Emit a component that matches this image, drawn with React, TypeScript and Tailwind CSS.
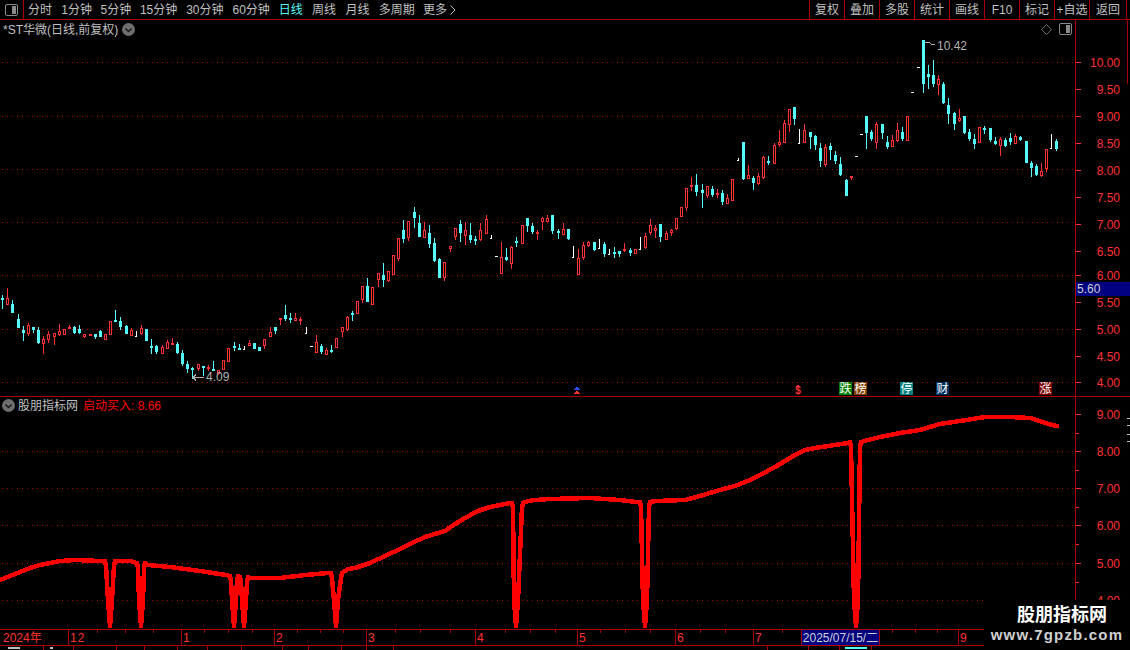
import React from "react";

type Candle = [string, number, number, number, number, number];

const CYAN = "#54fcfc";
const RED = "#ff3232";
const LINE = "#a80000";

// candles read in 3x crop units: kind, x, wick top, wick bottom, body top, body bottom
const seg1: Candle[] = [
  ["c",7,45,87,54,60],["r",22,24,75,55,75],["c",37,60,98,72,98],["c",55,102,145,117,145],["c",70,138,183,150,159],
  ["r",85,130,168,135,162],["c",100,141,158,141,150],["c",115,141,192,150,189],["r",130,168,222,177,192],["r",145,153,189,162,180],
  ["r",163,159,195,160,171],["r",178,132,168,153,165],["r",193,147,165,147,165],["s",208,135,148,141,147],["c",223,138,162,141,159],
  ["c",238,135,162,147,159],["r",253,162,174,162,171],["s",270,162,168,163,168],["c",286,162,177,162,171],["c",301,150,171,153,171],
  ["r",316,162,180,162,180],["r",331,123,165,123,165],["c",346,90,126,120,123],["c",361,111,150,123,141],["c",379,135,162,138,162],
  ["r",394,144,168,150,168],["w",409,153,171,153,153],["r",424,135,165,144,162],["c",439,147,183,147,183],["c",454,177,222,198,201],
  ["c",469,195,222,198,216],["r",487,195,222,201,222],["r",502,180,207,186,207],["s",517,174,195,189,195],["c",532,186,222,192,219],
  ["c",547,210,258,219,252],["c",562,243,279,252,267],["c",577,261,297,264,267],["r",595,252,273,252,267],["c",610,258,288,258,264],
  ["s",625,255,273,261,264],["c",640,243,270,267,270],["r",655,270,285,270,282],["r",670,240,270,240,270],["r",685,204,246,204,246],
  ["c",703,186,213,198,201],["c",718,192,210,204,207],["w",733,198,210,198,198],["r",748,180,198,189,198],["c",763,189,207,189,207],
  ["c",778,201,213,201,213],["r",793,177,207,177,198],["r",811,141,171,156,171],["c",826,141,162,141,153],["s",841,114,135,114,120],
  ["c",856,75,123,105,117],["c",871,99,129,114,117],["r",886,99,123,114,123],
];
const seg2: Candle[] = [
  ["s",16,141,165,147,153],["w",33,171,192,171,171],["d",47,228,231,228,231],["r",64,195,249,216,249],["c",79,222,252,228,246],
  ["r",94,234,255,240,255],["c",109,225,249,240,243],["r",124,204,234,204,234],["r",142,171,201,171,186],["r",157,138,183,141,180],
  ["c",172,123,153,129,135],["r",187,93,132,93,132],["r",202,48,99,48,90],["c",217,24,96,48,96],
];
const seg3: Candle[] = [
  ["r",217,291,345,291,345],["r",235,249,291,249,270],["c",250,219,291,255,270],["r",265,243,276,243,273],["r",280,195,255,195,255],
  ["r",295,144,213,144,207],["c",310,90,159,120,147],["r",325,93,153,93,144],["c",343,51,114,66,84],["c",358,75,141,99,141],
  ["r",373,96,144,120,144],["c",388,105,174,129,162],["c",403,144,216,159,213],["c",418,204,264,207,264],["r",433,216,273,216,264],
  ["r",451,168,186,168,177],["r",466,114,150,114,141],["c",481,90,156,102,129],["r",496,96,165,120,138],["c",511,99,159,135,150],
  ["c",526,138,165,147,150],["r",541,99,153,120,150],["r",559,75,132,87,132],["w",573,135,147,135,135],["d",588,198,201,198,201],
  ["r",604,156,252,201,252],["c",619,174,213,201,210],["r",634,168,237,171,222],["c",649,141,171,153,156],["r",667,105,162,105,162],
  ["c",682,84,126,84,108],["c",697,99,132,108,126],["s",712,120,150,126,132],["r",727,81,120,84,96],["r",742,75,96,84,96],
  ["c",757,75,132,75,123],["c",775,117,147,123,129],["r",790,99,135,117,135],["c",805,117,150,117,147],["w",820,168,204,168,168],
  ["r",835,177,255,204,255],["r",850,156,210,165,204],["r",865,153,171,156,168],["c",883,156,183,156,180],["w",898,147,177,147,147],
];
const seg4: Candle[] = [
  ["c",28,216,261,222,252],["w",43,237,255,237,237],["c",58,231,264,246,249],["c",73,243,261,243,252],["s",88,219,246,237,243],
  ["c",106,234,258,240,249],["r",121,237,252,237,252],["w",136,201,240,201,201],["r",151,189,237,198,234],["r",166,147,195,165,189],
  ["r",181,165,204,174,183],["c",196,162,216,162,201],["r",214,183,210,189,210],["r",229,177,198,180,189],["r",244,144,180,144,177],
  ["r",259,111,141,111,141],["r",274,54,123,54,114],
];
const seg5: Candle[] = [
  ["s",274,261,303,285,288],["c",289,252,318,285,306],["c",307,282,354,300,309],["r",322,288,324,288,318],["c",337,288,321,297,315],
  ["s",352,297,324,309,315],["c",367,300,345,309,336],["r",382,312,342,324,342],["r",397,267,333,267,333],["w",415,204,213,204,204],
  ["c",430,156,270,156,267],["r",445,225,267,255,267],["c",460,258,300,264,279],["r",475,249,285,258,282],["r",490,198,267,201,264],
  ["c",505,198,225,213,219],["r",523,159,222,165,222],["r",538,120,171,156,165],["r",553,90,159,99,159],["r",568,57,126,57,105],
  ["c",583,51,105,51,87],["w",598,117,162,117,117],["r",613,102,159,120,159],["c",631,126,177,126,141],["c",646,135,180,138,165],
  ["c",661,159,231,174,213],["r",676,162,231,171,225],["c",691,159,210,168,180],["c",706,183,222,195,213],["c",721,201,258,222,255],
  ["c",739,267,318,270,318],["s",754,258,270,258,264],["d",768,198,201,198,201],["d",783,132,135,132,135],
];
const seg6: Candle[] = [
  ["c",79,258,357,258,309],["c",94,300,333,306,327],["r",109,276,357,282,339],["c",127,282,327,282,309],["c",142,318,357,336,351],
  ["r",157,315,351,330,351],["r",172,279,336,300,333],["c",187,291,333,306,327],["r",202,258,333,258,333],["d",216,186,189,186,189],
  ["d",234,111,114,111,114],["c",250,30,189,30,162],["c",265,105,177,132,141],["c",280,90,171,135,162],["r",295,135,195,147,165],
  ["c",310,156,222,162,219],["c",325,204,282,225,252],["c",343,246,300,249,282],["r",358,237,276,264,273],["c",373,258,312,258,309],
  ["c",388,297,333,306,327],["c",403,312,357,327,342],["r",418,291,339,291,339],["c",433,288,312,294,297],["c",451,294,336,294,330],
  ["c",466,321,345,333,342],["r",481,321,378,327,348],["c",496,324,351,330,348],["c",511,309,345,324,336],["r",526,312,342,318,342],
  ["c",541,318,333,321,330],["c",559,333,399,333,399],["c",574,393,441,399,414],["c",589,402,438,408,435],["r",604,399,441,423,438],
  ["r",619,357,426,357,417],["w",634,312,357,312,312],["c",649,327,363,333,357],
];

const groups: [number, number, Candle[]][] = [
  [0, 280, seg1],
  [295, 270, seg2],
  [300, 190, seg3],
  [595, 170, seg4],
  [600, 90, seg5],
  [840, 30, seg6],
];

function CandleMark({ ox, oy, c }: { ox: number; oy: number; c: Candle }) {
  const [kind, rawX, wt, wb, bt, bb] = c;
  const x = Math.round(ox + rawX / 3);
  const top = Math.round(oy + wt / 3);
  const bottom = Math.round(oy + wb / 3);
  const bodyTop = Math.round(oy + bt / 3);
  const bodyBottom = Math.round(oy + bb / 3);
  if (kind === "d") return <rect x={x - 1} y={top} width={3} height={1} fill="#fff" />;
  if (kind === "w")
    return (
      <g fill="#fff">
        <rect x={x} y={top} width={1} height={bottom - top} />
        <rect x={x - 1} y={bottom - 1} width={1} height={1} />
      </g>
    );
  const color = kind === "c" ? CYAN : RED;
  const bodyHeight = Math.max(bodyBottom - bodyTop, 2);
  return (
    <g>
      <rect x={x} y={top} width={1} height={Math.max(bottom - top, 1)} fill={color} />
      {kind === "r" ? (
        <g>
          {/* hollow body: two side walls with one dark pixel between */}
          <rect x={x - 1} y={bodyTop} width={3} height={bodyHeight} fill={color} />
          <rect x={x} y={bodyTop + 1} width={1} height={Math.max(bodyHeight - 2, 0)} fill="#000" />
        </g>
      ) : (
        <rect x={x - 1} y={bodyTop} width={3} height={bodyHeight} fill={color} />
      )}
    </g>
  );
}

function ChevronDot({ className }: { className: string }) {
  return (
    <svg className={className} width="13" height="13" viewBox="0 0 13 13">
      <circle cx="6.5" cy="6.5" r="6.5" fill="#6e6e6e" />
      <path d="M3.5 5.5 L6.5 8.5 L9.5 5.5" fill="none" stroke="#151515" strokeWidth="1.4" />
    </svg>
  );
}

function PanelIcon({ className }: { className: string }) {
  return (
    <svg className={className} width="13" height="12" viewBox="0 0 13 12">
      <rect x="0.5" y="0.5" width="12" height="11" rx="1.5" fill="none" stroke="#8a8a8a" />
      <rect x="7" y="2" width="4" height="8" fill="#8a8a8a" />
    </svg>
  );
}

const periods = [
  { label: "分时", cls: "w-[24px] text-[#c0c0c0]" },
  { label: "1分钟", cls: "w-[30px] text-[#c0c0c0]" },
  { label: "5分钟", cls: "w-[30px] text-[#c0c0c0]" },
  { label: "15分钟", cls: "w-[37px] text-[#c0c0c0]" },
  { label: "30分钟", cls: "w-[37px] text-[#c0c0c0]" },
  { label: "60分钟", cls: "w-[37px] text-[#c0c0c0]" },
  { label: "日线", cls: "w-[24px] text-[#54fcfc]" },
  { label: "周线", cls: "w-[24px] text-[#c0c0c0]" },
  { label: "月线", cls: "w-[24px] text-[#c0c0c0]" },
  { label: "多周期", cls: "w-[36px] text-[#c0c0c0]" },
];

const tools = ["复权", "叠加", "多股", "统计", "画线", "F10", "标记", "+自选", "返回"];

const priceLabels: [string, number][] = [
  ["10.00", 62], ["9.50", 89], ["9.00", 116], ["8.50", 143], ["8.00", 170], ["7.50", 197], ["7.00", 224],
  ["6.50", 251], ["6.00", 275], ["5.50", 302], ["5.00", 329], ["4.50", 356], ["4.00", 382],
];
const gridLines = [62, 116, 169, 222, 275, 329, 382];

const indicatorLabels: [string, number][] = [
  ["9.00", 414], ["8.00", 451], ["7.00", 488], ["6.00", 525], ["5.00", 563], ["4.00", 600],
];

const badges = [
  { text: "跌", cls: "left-[839px] bg-[#008000]" },
  { text: "榜", cls: "left-[854px] bg-[#804000]" },
  { text: "停", cls: "left-[900px] bg-[#008080]" },
  { text: "财", cls: "left-[936px] bg-[#003060]" },
  { text: "涨", cls: "left-[1039px] bg-[#800000]" },
];

// one sell-off spike: two strands that open into a V at the curve and meet at the bottom
const spike = (x: number, top: number, left: number, right: number) =>
  `${x - left},${top} ${x - left + 1},${top + 5} ${x - 2},600 ${x},626 ${x + 2},600 ${x + right - 1},${top + 5} ${x + right},${top}`;

const linePoints = [
  "0,580 10,576 20,572 30,568 40,565 50,563 60,561 75,560 100,561",
  spike(110, 561, 5, 5),
  "122,561 130,561",
  spike(141, 563, 4, 4),
  "148,565 170,567 200,571 226,575",
  spike(234, 576, 4, 4),
  spike(244, 577, 4, 4),
  "250,578 255,578 280,578 305,575 328,573",
  spike(336, 573, 5, 6),
  "348,569 355,568 370,563 385,556 400,549 412,543 425,537 435,534 445,531 455,524 465,518 478,511 490,507 500,505 510,503",
  spike(516, 503, 4, 7),
  "528,501 535,500 550,499 590,498 620,500 636,502",
  spike(645, 502, 5, 5),
  "656,501 685,500 700,496 720,490 735,486 750,480 762,474 775,467 785,461 795,455 805,450 815,448 835,445 848,443",
  spike(856, 442, 6, 5),
  "868,440 880,437 900,433 920,430 930,427 940,424 960,421 985,417 1010,417 1030,418 1040,421 1048,424 1057,426",
].join(" ");

const months: [string, number][] = [["12", 68], ["1", 181], ["2", 274], ["3", 366], ["4", 475], ["5", 577], ["6", 675], ["7", 753], ["9", 958]];
const minorTicks = [97, 125, 153, 204, 228, 252, 297, 320, 343, 395, 420, 450, 505, 530, 555, 600, 625, 650, 700, 725, 782, 892, 915, 937, 985, 1010, 1040, 1065, 1095, 1110];
const footSeps = [43, 73, 116, 144, 177, 207, 241, 282, 308, 341, 366, 393, 767, 808, 839, 871];

export default function App() {
  return (
    <div className="relative flex h-[650px] w-[1130px] flex-col overflow-hidden bg-black font-['Liberation_Sans','Noto_Sans_CJK_SC',sans-serif] text-[12px] leading-none text-[#c0c0c0]">
      {/* top toolbar */}
      <div className="flex h-[20px] shrink-0 items-center border-b border-[#a80000]">
        <div className="flex h-full w-[24px] items-center justify-center border-r border-[#a80000]">
          <PanelIcon className="" />
        </div>
        <div className="ml-[4px] flex items-center gap-[9.3px]">
          {periods.map((p) => (
            <span key={p.label} className={`whitespace-nowrap ${p.cls}`}>{p.label}</span>
          ))}
          <span className="ml-[-1px] flex items-center whitespace-nowrap">
            更多
            <svg className="ml-[3px]" width="6" height="10" viewBox="0 0 6 10">
              <path d="M0.5 0.5 L5 5 L0.5 9.5" fill="none" stroke="#c0c0c0" />
            </svg>
          </span>
        </div>
        <div className="ml-auto mr-[3px] flex h-full">
          {tools.map((t) => (
            <div key={t} className="flex h-full w-[35px] items-center justify-center whitespace-nowrap border-l border-[#a80000] last:w-[38px] last:border-r">
              {t}
            </div>
          ))}
        </div>
      </div>

      {/* price panel */}
      <div className="flex h-[377px] shrink-0 border-b border-[#a80000]">
        <div className="relative w-[1075px] shrink-0">
          <svg className="block" width="1075" height="376" viewBox="0 20 1075 376" shapeRendering="crispEdges">
            {gridLines.map((y) => (
              <line key={y} x1="2" x2="1075" y1={y + 0.5} y2={y + 0.5} stroke={LINE} strokeDasharray="1 4" />
            ))}
            {groups.map(([ox, oy, list]) => list.map((c, i) => <CandleMark key={`${ox}-${i}`} ox={ox} oy={oy} c={c} />))}
            {/* low and high callouts */}
            <g fill="none" stroke="#b0b0b0">
              <path d="M204 377.5H193M196 374.5L193 377.5L196 380.5" />
              <path d="M925 42.5H929M929 42.5L932 44.5H935" />
            </g>
            {/* event markers */}
            <path d="M577 386L580 390H574Z" fill="#3050ff" />
            <path d="M577 390L580 394H574Z" fill={RED} />
            <path d="M798 384L800 387H796Z" fill={RED} />
            <text x="798" y="394" textAnchor="middle" fontSize="10" fontWeight="bold" fill={RED} shapeRendering="auto">$</text>
          </svg>
          <span className="absolute left-[206px] top-[351px] text-[12px] text-[#b0b0b0]">4.09</span>
          <span className="absolute left-[937px] top-[20px] text-[12px] text-[#b0b0b0]">10.42</span>
          <div className="absolute left-[3px] top-[3px] flex items-center">
            <span className="whitespace-nowrap">*ST华微(日线,前复权)</span>
            <ChevronDot className="ml-[4px]" />
          </div>
          <div className="absolute left-[1041px] top-[3px] flex items-center gap-[7px]">
            <svg width="11" height="11" viewBox="0 0 11 11">
              <path d="M5.5 0.5 L10.5 5.5 L5.5 10.5 L0.5 5.5Z" fill="none" stroke="#707070" />
            </svg>
            <PanelIcon className="" />
          </div>
          {badges.map((b) => (
            <span key={b.text} className={`absolute top-[362px] flex h-[13px] w-[13px] items-center justify-center text-[12px] text-white ${b.cls}`}>
              {b.text}
            </span>
          ))}
        </div>
        <div className="relative w-[55px] shrink-0 border-l border-[#a80000]">
          <svg className="block" width="54" height="376" viewBox="1076 20 54 376">
            <line x1="1127.5" x2="1127.5" y1="20" y2="84" stroke={LINE} />
            {priceLabels.map(([t, y]) => (
              <g key={t}>
                <line x1="1076" x2="1081" y1={y + 0.5} y2={y + 0.5} stroke={RED} shapeRendering="crispEdges" />
                <text x="1120" y={y + 4.5} textAnchor="end" fontSize="12" fill={RED}>{t}</text>
              </g>
            ))}
          </svg>
          <span className="absolute left-0 top-[262px] flex h-[14px] w-full items-center bg-[#000080] pl-[1px] text-[#d0d0d0]">5.60</span>
        </div>
      </div>

      {/* indicator panel */}
      <div className="flex h-[233px] shrink-0 border-b border-[#a80000]">
        <div className="relative w-[1075px] shrink-0">
          <svg className="block" width="1075" height="232" viewBox="0 397 1075 232">
            {indicatorLabels.slice(1).map(([t, y]) => (
              <line key={t} x1="2" x2="1075" y1={y + 0.5} y2={y + 0.5} stroke={LINE} strokeDasharray="1 4" shapeRendering="crispEdges" />
            ))}
            <polyline points={linePoints} fill="none" stroke="#ff0000" strokeWidth="4.5" strokeLinejoin="round" strokeLinecap="round" shapeRendering="crispEdges" />
          </svg>
          <div className="absolute left-[2px] top-[2px] flex items-center">
            <ChevronDot className="" />
            <span className="ml-[3px] whitespace-nowrap">股朋指标网</span>
            <span className="ml-[5px] whitespace-nowrap text-[#ff0000]">启动买入: 8.66</span>
          </div>
        </div>
        <div className="w-[55px] shrink-0 border-l border-[#a80000]">
          <svg className="block" width="54" height="232" viewBox="1076 397 54 232">
            {indicatorLabels.map(([t, y]) => (
              <g key={t}>
                <line x1="1076" x2="1081" y1={y + 0.5} y2={y + 0.5} stroke={RED} shapeRendering="crispEdges" />
                <line x1="1076" x2="1079" y1={y + 19.5} y2={y + 19.5} stroke={RED} shapeRendering="crispEdges" />
                <text x="1120" y={y + 4.5} textAnchor="end" fontSize="12" fill={RED}>{t}</text>
              </g>
            ))}
            {[418, 425, 434, 441].map((y) => (
              <rect key={y} x="1127" y={y} width="3" height="1" fill="#c0c0c0" />
            ))}
          </svg>
        </div>
      </div>

      {/* time axis */}
      <div className="relative h-[16px] shrink-0 border-b border-[#a80000] text-[#ff3232]">
        <span className="absolute left-[3px] top-[2px]">2024年</span>
        {minorTicks.map((x) => (
          <span key={x} className="absolute top-0 h-[3px] w-px bg-[#a80000]" style={{ left: x }} />
        ))}
        {months.map(([label, x]) => (
          <span key={label} className="absolute top-0 flex h-full items-center border-l border-[#a80000] pl-[1px] tracking-[1px]" style={{ left: x }}>
            {label}
          </span>
        ))}
        <span className="absolute left-[801px] top-0 flex h-full w-[79px] items-center justify-center border-x border-[#a80000] bg-[#000080] text-[#d0d0d0]">
          2025/07/15/二
        </span>
      </div>

      {/* clipped bottom bar */}
      <div className="relative flex-1">
        {footSeps.map((x) => (
          <span key={x} className="absolute top-0 h-full w-px bg-[#a80000]" style={{ left: x }} />
        ))}
        <span className="absolute left-[8px] top-[1px] h-[2px] w-[12px] bg-[#c0c0c0]" />
        <span className="absolute left-[50px] top-[1px] h-[2px] w-[3px] bg-[#c0c0c0]" />
        <span className="absolute left-[845px] top-[1px] h-[2px] w-[22px] bg-[#54fcfc]" />
      </div>

      {/* site watermark */}
      <div className="absolute bottom-0 right-0 flex h-[50px] w-[146px] flex-col items-center bg-black pt-[4px] text-white">
        <span className="ml-[10px] text-[18px] font-bold leading-[22px]">股朋指标网</span>
        <span className="text-[15px] font-bold leading-[18px] tracking-[1.2px] text-[#d0d0d0]">www.7gpzb.com</span>
      </div>
    </div>
  );
}
